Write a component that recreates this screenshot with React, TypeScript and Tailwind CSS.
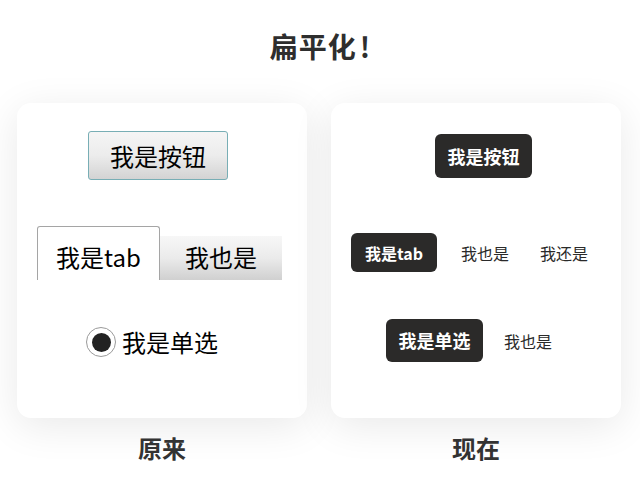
import React from 'react';

const cjk = "font-['Noto_Sans_CJK_SC','Noto_Sans',sans-serif]";

const OldStyle: React.FC = () => (
  <div className="w-[290px] h-[315px] rounded-[14px] bg-white shadow-[0_8px_40px_rgba(0,0,0,0.09)] flex flex-col items-start">
    <button className="mt-[28px] ml-[71px] w-[140px] h-[49px] border border-[#78aeb5] rounded-[3px] bg-gradient-to-b from-[#f5f5f5] via-[#ececec] to-[#d3d3d3] text-[24px] leading-[34px] text-black flex items-center justify-center">
      我是按钮
    </button>

    <div className="mt-[46px] ml-[20px] flex items-end">
      <div className="w-[123px] h-[54px] border border-b-0 border-[#a5a5a5] rounded-t-[3px] bg-white flex items-end justify-center pb-[6px] text-[24px] leading-[34px] text-black">
        我是tab
      </div>
      <div className="w-[122px] h-[44px] bg-gradient-to-b from-[#f7f7f7] via-[#ebebeb] to-[#d0d0d0] flex items-end justify-center pb-[6px] text-[24px] leading-[34px] text-black">
        我也是
      </div>
    </div>

    <div className="mt-[47px] ml-[69px] flex items-center gap-[6px]">
      <span className="w-[30px] h-[30px] rounded-full border border-[#9a9a9a] bg-white flex items-center justify-center">
        <span className="w-[19px] h-[19px] rounded-full bg-[#222]" />
      </span>
      <span className="text-[24px] leading-[30px] text-black">我是单选</span>
    </div>
  </div>
);

const FlatStyle: React.FC = () => (
  <div className="w-[290px] h-[315px] rounded-[14px] bg-white shadow-[0_8px_40px_rgba(0,0,0,0.09)] flex flex-col items-start">
    <button className="mt-[31px] ml-[104px] w-[97px] h-[44px] rounded-[6px] bg-[#2b2a29] text-white font-bold text-[18px] flex items-center justify-center">
      我是按钮
    </button>

    <div className="mt-[55px] ml-[20px] flex items-center">
      <div className="w-[86px] h-[39px] rounded-[6px] bg-[#2b2a29] text-white font-bold text-[16px] flex items-center justify-center">
        我是tab
      </div>
      <span className="ml-[24px] text-[16px] text-[#2a2a2a]">我也是</span>
      <span className="ml-[31px] text-[16px] text-[#2a2a2a]">我还是</span>
    </div>

    <div className="mt-[47px] ml-[55px] flex items-center">
      <div className="w-[97px] h-[43px] rounded-[6px] bg-[#2b2a29] text-white font-bold text-[18px] flex items-center justify-center">
        我是单选
      </div>
      <span className="ml-[21px] text-[16px] text-[#2a2a2a]">我也是</span>
    </div>
  </div>
);

const App: React.FC = () => {
  return (
    <div className={`w-[640px] h-[482px] bg-white flex flex-col items-center overflow-hidden ${cjk}`}>
      <h1 className="mt-[28px] h-[36px] text-[28px] leading-[36px] font-bold text-[#2e2e2e] flex items-center">
        <span className="tracking-[1px]">扁平化</span>
        <span className="ml-[3px]">!</span>
      </h1>

      <div className="mt-[39px] w-full pl-[17px] flex gap-6">
        <div className="flex flex-col items-center">
          <OldStyle />
          <div className="mt-[14px] text-[24px] leading-[32px] font-bold text-[#333]">原来</div>
        </div>
        <div className="flex flex-col items-center">
          <FlatStyle />
          <div className="mt-[14px] text-[24px] leading-[32px] font-bold text-[#333]">现在</div>
        </div>
      </div>
    </div>
  );
};

export default App;
